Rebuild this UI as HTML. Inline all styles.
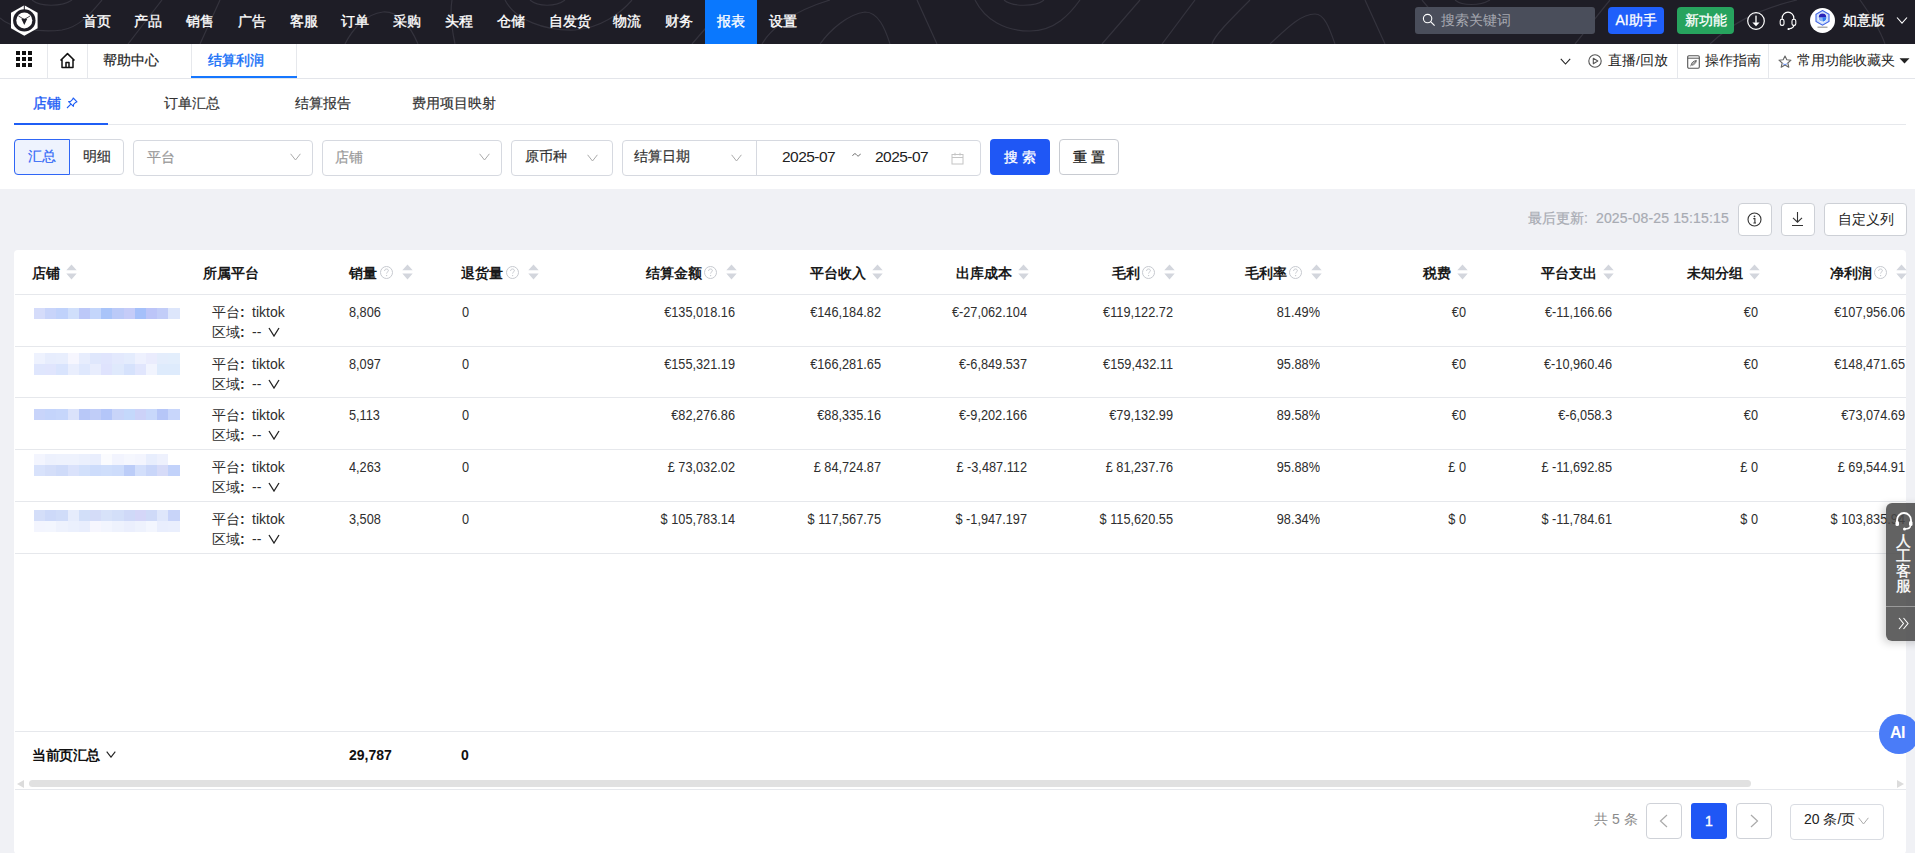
<!DOCTYPE html><html><head><meta charset="utf-8"><style>
*{box-sizing:border-box;margin:0;padding:0}
html,body{width:1915px;height:853px;overflow:hidden}
body{position:relative;background:#fff;font-family:"Liberation Sans",sans-serif;color:#222;font-size:14px}
.a{position:absolute;white-space:nowrap}
#top{position:absolute;left:0;top:0;width:1915px;height:44px;background:#1e1d26;overflow:hidden}
.nav{position:absolute;top:11px;color:#fff;font-size:14px;line-height:20px;-webkit-text-stroke:0.35px #fff}
.t14{font-size:14px;line-height:20px;-webkit-text-stroke:0.2px currentColor}
.num{transform:scaleX(0.91);transform-origin:left center}
.num.r{transform-origin:right center}
.hd{position:absolute;top:263px;font-size:14px;line-height:20px;font-weight:bold;color:#1a1a1a;white-space:nowrap}
.q{position:absolute;top:266px;width:13px;height:13px}
.srt{position:absolute;top:264px;width:11px;height:16px}
.cell{position:absolute;font-size:14px;line-height:20px;color:#2e2e2e;white-space:nowrap}
.r{text-align:right}
.btn{position:absolute;border:1px solid #cdd0d6;border-radius:4px;background:#fff}
.sel{position:absolute;top:140px;height:36px;border:1px solid #d6d9e0;border-radius:4px;background:#fff}
.chev{position:absolute}
</style></head><body>
<div id="top">
<svg class="a" style="left:0;top:0" width="1915" height="44">
<g fill="none" stroke="#34333d" stroke-width="1.2">
<path d="M32 0 C40 7 62 7 72 0"/>
<path d="M0 18 C10 28 40 33 62 30 C80 27 92 12 102 0"/>
<path d="M128 44 L162 0"/><path d="M200 44 L220 0"/>
<path d="M345 44 C352 30 365 14 383 12 C398 11 410 25 418 44"/>
<path d="M455 44 C452 30 450 12 452 0"/>
<path d="M530 0 C538 7 556 7 565 0"/>
<path d="M505 0 C515 20 545 31 575 30 C600 28 620 14 632 0"/>
<path d="M692 44 L730 0"/>
<path d="M762 44 C770 30 790 12 830 0"/>
<path d="M820 44 C830 30 848 14 865 12 C878 12 885 28 890 44"/>
<path d="M917 0 L937 44"/>
<path d="M1004 0 C1012 7 1036 7 1044 0"/>
<path d="M975 0 C985 20 1005 31 1030 31 C1055 31 1070 14 1080 0"/>
<path d="M1102 44 L1140 0"/><path d="M1162 44 L1195 0"/>
<path d="M1212 44 C1214 36 1230 20 1250 0"/>
<path d="M1270 44 C1285 30 1300 14 1315 14 C1325 14 1330 30 1335 44"/>
<path d="M1365 0 L1385 44"/><path d="M1422 0 L1432 12"/>
<path d="M1455 0 C1462 6 1480 6 1490 0"/>
<path d="M1575 44 C1585 32 1595 18 1610 0"/>
<path d="M1710 44 C1730 25 1755 10 1797 0"/>
<path d="M1860 0 C1870 14 1880 30 1885 44"/>
</g></svg>
<svg class="a" style="left:9px;top:4px" width="31" height="33" viewBox="0 0 31 33">
<polygon points="15.3,1.2 28.6,8.8 28.6,24.2 15.3,31.8 2,24.2 2,8.8" fill="#fff"/>
<circle cx="15.3" cy="16.4" r="11.2" fill="#1e1d26"/>
<circle cx="15.3" cy="16.4" r="8" fill="#fff"/>
<rect x="14.8" y="1" width="1" height="5" fill="#1e1d26"/>
<path d="M12.3 14.8 L18.3 14.8 L15.3 21 Z" fill="#1e1d26"/>
<path d="M15.3 15.5 L9.5 12 M15.3 15.5 L21 12" stroke="#1e1d26" stroke-width="0.8"/>
</svg>
<div class="a" style="left:705px;top:0;width:52px;height:44px;background:#0a78fe"></div>
<span class="nav" style="left:83px">首页</span>
<span class="nav" style="left:134px">产品</span>
<span class="nav" style="left:186px">销售</span>
<span class="nav" style="left:238px">广告</span>
<span class="nav" style="left:290px">客服</span>
<span class="nav" style="left:341px">订单</span>
<span class="nav" style="left:393px">采购</span>
<span class="nav" style="left:445px">头程</span>
<span class="nav" style="left:497px">仓储</span>
<span class="nav" style="left:549px">自发货</span>
<span class="nav" style="left:613px">物流</span>
<span class="nav" style="left:665px">财务</span>
<span class="nav" style="left:769px">设置</span>
<span class="nav" style="left:717px">报表</span>
<div class="a" style="left:1415px;top:7px;width:180px;height:27px;background:#4a4e5b;border-radius:3px"></div>
<svg class="a" style="left:1422px;top:13px" width="14" height="14" viewBox="0 0 14 14"><circle cx="5.6" cy="5.6" r="4.2" fill="none" stroke="#fff" stroke-width="1.1"/><path d="M8.6 8.6 L12.6 12.6" stroke="#fff" stroke-width="1.2"/></svg>
<span class="a" style="left:1441px;top:10px;font-size:14px;line-height:20px;color:#a6a8b0">搜索关键词</span>
<div class="a" style="left:1608px;top:7px;width:56px;height:27px;background:#1f5ffb;border-radius:4px;color:#fff;font-size:14px;line-height:27px;text-align:center;-webkit-text-stroke:0.3px #fff">AI助手</div>
<div class="a" style="left:1677px;top:7px;width:57px;height:27px;background:#27a35e;border-radius:4px;color:#fff;font-size:14px;line-height:27px;text-align:center;-webkit-text-stroke:0.3px #fff">新功能</div>
<svg class="a" style="left:1747px;top:12px" width="18" height="18" viewBox="0 0 18 18"><circle cx="9" cy="9" r="8.3" fill="none" stroke="#fff" stroke-width="1.2"/><rect x="8.2" y="3.6" width="1.6" height="7.2" fill="#d8d8d8"/><path d="M5.4 10.4 H12.6 L9 14.2 Z" fill="#fff"/></svg>
<svg class="a" style="left:1779px;top:11px" width="18" height="19" viewBox="0 0 18 19"><path d="M3.2 8.5 V7 A5.8 5.8 0 0 1 14.8 7 V8.5" fill="none" stroke="#fff" stroke-width="1.2"/><rect x="1.2" y="8.2" width="3.8" height="6.2" rx="1.7" fill="none" stroke="#fff" stroke-width="1.1"/><rect x="13" y="8.2" width="3.8" height="6.2" rx="1.7" fill="none" stroke="#fff" stroke-width="1.1"/><path d="M15 14.4 C14.6 16.8 12.8 17.5 10.2 17.8" fill="none" stroke="#fff" stroke-width="1.1"/><circle cx="9.6" cy="18" r="1.1" fill="#fff"/></svg>
<div class="a" style="left:1810px;top:8px;width:25px;height:25px;border-radius:50%;background:#fff"></div>
<svg class="a" style="left:1815px;top:10px" width="15" height="19" viewBox="0 0 15 19"><polygon points="7.5,0.5 14,4.2 14,11.5 7.5,15.2 1,11.5 1,4.2" fill="#cfe0fb" stroke="#3f63e6" stroke-width="1.1"/><circle cx="7.5" cy="7.8" r="4.6" fill="#fff"/><circle cx="7.5" cy="7.8" r="3.8" fill="#8db4f3"/><path d="M3.7 7.2 A3.8 3.8 0 0 1 11.3 7.2 Z" fill="#2a22b8"/><path d="M7.5 7.2 L11.3 7.2 A3.8 3.8 0 0 1 8 11.6 Z" fill="#2f7af0"/><rect x="2.5" y="16.6" width="10" height="1.2" fill="#999"/></svg>
<span class="a" style="left:1843px;top:10px;color:#fff;font-size:14px;line-height:20px;-webkit-text-stroke:0.3px #fff">如意版</span>
<svg class="a" style="left:1896px;top:16px" width="12" height="9" viewBox="0 0 12 9"><path d="M1 1.5 L6 7.2 L11 1.5" fill="none" stroke="#fff" stroke-width="1.1"/></svg>
</div>
<div class="a" style="left:0;top:78px;width:1915px;height:1px;background:#e3e5ea"></div>
<div class="a" style="left:47px;top:44px;width:1px;height:34px;background:#e6e8ec"></div>
<div class="a" style="left:87px;top:44px;width:1px;height:34px;background:#e6e8ec"></div>
<div class="a" style="left:191px;top:44px;width:1px;height:34px;background:#e6e8ec"></div>
<div class="a" style="left:296px;top:44px;width:1px;height:34px;background:#e6e8ec"></div>
<svg class="a" style="left:16px;top:51px" width="16" height="16" viewBox="0 0 16 16" fill="#111"><rect x="0" y="0" width="4" height="4"/><rect x="0" y="6" width="4" height="4"/><rect x="0" y="12" width="4" height="4"/><rect x="6" y="0" width="4" height="4"/><rect x="6" y="6" width="4" height="4"/><rect x="6" y="12" width="4" height="4"/><rect x="12" y="0" width="4" height="4"/><rect x="12" y="6" width="4" height="4"/><rect x="12" y="12" width="4" height="4"/></svg>
<svg class="a" style="left:59px;top:52px" width="17" height="17" viewBox="0 0 17 17"><path d="M1.5 8.5 L8.5 1.6 L15.5 8.5 M3 7.2 V15.5 H14 V7.2 M7 15.5 V10.6 H10 V15.5" fill="none" stroke="#111" stroke-width="1.5" stroke-linejoin="round"/></svg>
<span class="a t14" style="left:103px;top:50px;color:#222">帮助中心</span>
<span class="a t14" style="left:208px;top:50px;color:#1670f7;-webkit-text-stroke:0.4px #1670f7">结算利润</span>
<div class="a" style="left:191px;top:76px;width:106px;height:2px;background:#1677ff"></div>
<svg class="a" style="left:1560px;top:58px" width="11" height="7" viewBox="0 0 11 7"><path d="M0.8 0.8 L5.5 6 L10.2 0.8" fill="none" stroke="#222" stroke-width="1.1"/></svg>
<svg class="a" style="left:1588px;top:54px" width="14" height="14" viewBox="0 0 14 14"><circle cx="7" cy="7" r="6.2" fill="none" stroke="#555" stroke-width="1.1"/><path d="M5.3 4.2 L9.8 7 L5.3 9.8 Z" fill="none" stroke="#555" stroke-width="1.1" stroke-linejoin="round"/></svg>
<span class="a" style="left:1608px;top:52px;font-size:13.5px;line-height:18px;color:#222">直播/回放</span>
<div class="a" style="left:1677px;top:44px;width:1px;height:34px;background:#e6e8ec"></div>
<svg class="a" style="left:1687px;top:55px" width="13" height="14" viewBox="0 0 13 14"><rect x="0.7" y="0.7" width="11.6" height="12.6" rx="1.2" fill="none" stroke="#555" stroke-width="1.1"/><path d="M0.7 3.2 H12.3" stroke="#555" stroke-width="1"/><path d="M3.3 11 L9.3 5.6 M4.2 9.8 C4.4 7.6 6.8 5.8 9.3 5.6 C9.1 8 7.2 9.9 4.9 10.2" fill="none" stroke="#555" stroke-width="0.9"/></svg>
<span class="a" style="left:1705px;top:52px;font-size:13.5px;line-height:18px;color:#222">操作指南</span>
<div class="a" style="left:1768px;top:44px;width:1px;height:34px;background:#e6e8ec"></div>
<svg class="a" style="left:1778px;top:55px" width="14" height="13" viewBox="0 0 14 13"><path d="M7 1 L8.8 4.8 L13 5.2 L9.8 8 L10.8 12.2 L7 10.1 L3.2 12.2 L4.2 8 L1 5.2 L5.2 4.8 Z" fill="none" stroke="#666" stroke-width="1.1" stroke-linejoin="round"/><path d="M5 8.6 C6 9.8 8 9.8 9 8.6" fill="none" stroke="#4b7cf5" stroke-width="0.8"/></svg>
<span class="a" style="left:1797px;top:52px;font-size:13.5px;line-height:18px;color:#222">常用功能收藏夹</span>
<svg class="a" style="left:1899px;top:58px" width="11" height="6" viewBox="0 0 11 6"><path d="M0.5 0.3 H10.5 L5.5 5.6 Z" fill="#222"/></svg>
<span class="a t14" style="left:33px;top:93px;color:#1f5ef5;-webkit-text-stroke:0.4px #1f5ef5">店铺</span>
<svg class="a" style="left:66px;top:97px" width="12" height="12" viewBox="0 0 12 12"><path d="M7.2 1 L11 4.8 L9.6 5.4 L7.6 7.4 L7.4 9.4 L2.6 4.6 L4.6 4.4 L6.6 2.4 Z M4.9 7.1 L1 11" fill="none" stroke="#1f5ef5" stroke-width="1.1" stroke-linejoin="round"/></svg>
<span class="a t14" style="left:164px;top:93px;color:#333">订单汇总</span>
<span class="a t14" style="left:295px;top:93px;color:#333">结算报告</span>
<span class="a t14" style="left:412px;top:93px;color:#333">费用项目映射</span>
<div class="a" style="left:14px;top:124px;width:1892px;height:1px;background:#e6e8ec"></div>
<div class="a" style="left:14px;top:123px;width:94px;height:2px;background:#1f5ef5"></div>
<div class="a" style="left:14px;top:139px;width:110px;height:36px;border:1px solid #d6d9e0;border-radius:4px"></div>
<div class="a" style="left:14px;top:139px;width:56px;height:36px;border:1px solid #2f66f6;border-radius:4px 0 0 4px;background:#eef3fe"></div>
<span class="a t14" style="left:28px;top:146px;color:#2f66f6">汇总</span>
<span class="a t14" style="left:83px;top:146px;color:#333">明细</span>
<div class="sel" style="left:133px;width:180px"></div>
<span class="a t14" style="left:147px;top:147px;color:#999">平台</span>
<svg class="a" style="left:290px;top:153px" width="11" height="8" viewBox="0 0 11 8"><path d="M0.6 0.8 L5.5 7 L10.4 0.8" fill="none" stroke="#aaa" stroke-width="1"/></svg>
<div class="sel" style="left:322px;width:180px"></div>
<span class="a t14" style="left:335px;top:147px;color:#999">店铺</span>
<svg class="a" style="left:479px;top:153px" width="11" height="8" viewBox="0 0 11 8"><path d="M0.6 0.8 L5.5 7 L10.4 0.8" fill="none" stroke="#aaa" stroke-width="1"/></svg>
<div class="sel" style="left:511px;width:102px"></div>
<span class="a t14" style="left:525px;top:146px;color:#333">原币种</span>
<svg class="a" style="left:587px;top:154px" width="11" height="8" viewBox="0 0 11 8"><path d="M0.6 0.8 L5.5 7 L10.4 0.8" fill="none" stroke="#aaa" stroke-width="1"/></svg>
<div class="sel" style="left:622px;width:359px"></div>
<div class="a" style="left:756px;top:140px;width:1px;height:36px;background:#d6d9e0"></div>
<span class="a t14" style="left:634px;top:146px;color:#333">结算日期</span>
<svg class="a" style="left:731px;top:154px" width="11" height="8" viewBox="0 0 11 8"><path d="M0.6 0.8 L5.5 7 L10.4 0.8" fill="none" stroke="#aaa" stroke-width="1"/></svg>
<span class="a" style="left:782px;top:147px;font-size:15.5px;line-height:20px;letter-spacing:-0.55px;color:#222">2025-07</span>
<svg class="a" style="left:852px;top:152px" width="9" height="6" viewBox="0 0 9 6"><path d="M0.6 3.8 C1.8 1.4 3.4 1.2 4.5 2.8 C5.6 4.4 7.2 4.4 8.4 1.8" fill="none" stroke="#666" stroke-width="1"/></svg>
<span class="a" style="left:875px;top:147px;font-size:15.5px;line-height:20px;letter-spacing:-0.55px;color:#222">2025-07</span>
<svg class="a" style="left:951px;top:152px" width="13" height="13" viewBox="0 0 13 13"><rect x="1" y="2.5" width="11" height="9.5" fill="none" stroke="#c4c4c4" stroke-width="1"/><path d="M1 5.5 H12 M4 0.8 V3.5 M9 0.8 V3.5" stroke="#c4c4c4" stroke-width="1"/></svg>
<div class="a" style="left:990px;top:139px;width:60px;height:36px;background:#1f57f5;border-radius:4px;color:#fff;font-size:14px;line-height:36px;text-align:center;letter-spacing:4px;padding-left:4px;-webkit-text-stroke:0.3px #fff">搜索</div>
<div class="btn" style="left:1059px;top:139px;width:60px;height:36px;color:#222;font-size:14px;line-height:34px;text-align:center;letter-spacing:4px;padding-left:4px;border-color:#c8cbd1;-webkit-text-stroke:0.3px #222">重置</div>
<div class="a" style="left:0;top:189px;width:1915px;height:664px;background:#f0f1f5"></div>
<span class="a t14" style="left:1528px;top:208px;color:#a8abb3">最后更新<span style="display:inline-block;width:12px">:</span><span style="letter-spacing:0.15px">2025-08-25 15:15:15</span></span>
<div class="btn" style="left:1738px;top:203px;width:34px;height:33px"></div>
<svg class="a" style="left:1747px;top:212px" width="15" height="15" viewBox="0 0 15 15"><circle cx="7.5" cy="7.5" r="6.5" fill="none" stroke="#333" stroke-width="1.1"/><circle cx="7.5" cy="4.3" r="0.9" fill="#333"/><path d="M6.3 6.6 H7.9 V11 M6.4 11 H9" fill="none" stroke="#333" stroke-width="1.1"/></svg>
<div class="btn" style="left:1781px;top:203px;width:34px;height:33px"></div>
<svg class="a" style="left:1790px;top:211px" width="15" height="16" viewBox="0 0 15 16"><path d="M7.5 1 V11 M3 6.8 L7.5 11.2 L12 6.8 M2 14.5 H13" fill="none" stroke="#333" stroke-width="1.1"/></svg>
<div class="btn" style="left:1824px;top:203px;width:83px;height:33px;color:#222;font-size:14px;line-height:31px;text-align:center">自定义列</div>
<div class="a" style="left:14px;top:250px;width:1892px;height:604px;background:#fff;border-radius:4px"></div>
<div class="a" style="left:15px;top:294px;width:1891px;height:1px;background:#e6e8ec"></div>
<span class="hd" style="left:32px">店铺</span>
<svg class="srt" style="left:66px" viewBox="0 0 11 16"><path d="M5.5 0.4 L10.7 6.2 H0.3 Z M0.3 9.4 H10.7 L5.5 15.4 Z" fill="#d3d6dd"/></svg>
<span class="hd" style="left:203px">所属平台</span>
<span class="hd" style="left:349px">销量</span>
<svg class="q" style="left:380px" viewBox="0 0 13 13"><circle cx="6.5" cy="6.5" r="6" fill="none" stroke="#c6c9cf" stroke-width="1"/><path d="M4.6 5 C4.6 3.6 5.5 3 6.5 3 C7.6 3 8.4 3.7 8.4 4.7 C8.4 5.9 6.6 6 6.6 7.5" fill="none" stroke="#c6c9cf" stroke-width="1"/><circle cx="6.6" cy="9.6" r="0.7" fill="#c6c9cf"/></svg>
<svg class="srt" style="left:402px" viewBox="0 0 11 16"><path d="M5.5 0.4 L10.7 6.2 H0.3 Z M0.3 9.4 H10.7 L5.5 15.4 Z" fill="#d3d6dd"/></svg>
<span class="hd" style="left:461px">退货量</span>
<svg class="q" style="left:506px" viewBox="0 0 13 13"><circle cx="6.5" cy="6.5" r="6" fill="none" stroke="#c6c9cf" stroke-width="1"/><path d="M4.6 5 C4.6 3.6 5.5 3 6.5 3 C7.6 3 8.4 3.7 8.4 4.7 C8.4 5.9 6.6 6 6.6 7.5" fill="none" stroke="#c6c9cf" stroke-width="1"/><circle cx="6.6" cy="9.6" r="0.7" fill="#c6c9cf"/></svg>
<svg class="srt" style="left:528px" viewBox="0 0 11 16"><path d="M5.5 0.4 L10.7 6.2 H0.3 Z M0.3 9.4 H10.7 L5.5 15.4 Z" fill="#d3d6dd"/></svg>
<span class="hd" style="left:402px;width:300px;text-align:right">结算金额</span>
<svg class="q" style="left:704px" viewBox="0 0 13 13"><circle cx="6.5" cy="6.5" r="6" fill="none" stroke="#c6c9cf" stroke-width="1"/><path d="M4.6 5 C4.6 3.6 5.5 3 6.5 3 C7.6 3 8.4 3.7 8.4 4.7 C8.4 5.9 6.6 6 6.6 7.5" fill="none" stroke="#c6c9cf" stroke-width="1"/><circle cx="6.6" cy="9.6" r="0.7" fill="#c6c9cf"/></svg>
<svg class="srt" style="left:726px" viewBox="0 0 11 16"><path d="M5.5 0.4 L10.7 6.2 H0.3 Z M0.3 9.4 H10.7 L5.5 15.4 Z" fill="#d3d6dd"/></svg>
<span class="hd" style="left:566px;width:300px;text-align:right">平台收入</span>
<svg class="srt" style="left:872px" viewBox="0 0 11 16"><path d="M5.5 0.4 L10.7 6.2 H0.3 Z M0.3 9.4 H10.7 L5.5 15.4 Z" fill="#d3d6dd"/></svg>
<span class="hd" style="left:712px;width:300px;text-align:right">出库成本</span>
<svg class="srt" style="left:1018px" viewBox="0 0 11 16"><path d="M5.5 0.4 L10.7 6.2 H0.3 Z M0.3 9.4 H10.7 L5.5 15.4 Z" fill="#d3d6dd"/></svg>
<span class="hd" style="left:840px;width:300px;text-align:right">毛利</span>
<svg class="q" style="left:1142px" viewBox="0 0 13 13"><circle cx="6.5" cy="6.5" r="6" fill="none" stroke="#c6c9cf" stroke-width="1"/><path d="M4.6 5 C4.6 3.6 5.5 3 6.5 3 C7.6 3 8.4 3.7 8.4 4.7 C8.4 5.9 6.6 6 6.6 7.5" fill="none" stroke="#c6c9cf" stroke-width="1"/><circle cx="6.6" cy="9.6" r="0.7" fill="#c6c9cf"/></svg>
<svg class="srt" style="left:1164px" viewBox="0 0 11 16"><path d="M5.5 0.4 L10.7 6.2 H0.3 Z M0.3 9.4 H10.7 L5.5 15.4 Z" fill="#d3d6dd"/></svg>
<span class="hd" style="left:987px;width:300px;text-align:right">毛利率</span>
<svg class="q" style="left:1289px" viewBox="0 0 13 13"><circle cx="6.5" cy="6.5" r="6" fill="none" stroke="#c6c9cf" stroke-width="1"/><path d="M4.6 5 C4.6 3.6 5.5 3 6.5 3 C7.6 3 8.4 3.7 8.4 4.7 C8.4 5.9 6.6 6 6.6 7.5" fill="none" stroke="#c6c9cf" stroke-width="1"/><circle cx="6.6" cy="9.6" r="0.7" fill="#c6c9cf"/></svg>
<svg class="srt" style="left:1311px" viewBox="0 0 11 16"><path d="M5.5 0.4 L10.7 6.2 H0.3 Z M0.3 9.4 H10.7 L5.5 15.4 Z" fill="#d3d6dd"/></svg>
<span class="hd" style="left:1151px;width:300px;text-align:right">税费</span>
<svg class="srt" style="left:1457px" viewBox="0 0 11 16"><path d="M5.5 0.4 L10.7 6.2 H0.3 Z M0.3 9.4 H10.7 L5.5 15.4 Z" fill="#d3d6dd"/></svg>
<span class="hd" style="left:1297px;width:300px;text-align:right">平台支出</span>
<svg class="srt" style="left:1603px" viewBox="0 0 11 16"><path d="M5.5 0.4 L10.7 6.2 H0.3 Z M0.3 9.4 H10.7 L5.5 15.4 Z" fill="#d3d6dd"/></svg>
<span class="hd" style="left:1443px;width:300px;text-align:right">未知分组</span>
<svg class="srt" style="left:1749px" viewBox="0 0 11 16"><path d="M5.5 0.4 L10.7 6.2 H0.3 Z M0.3 9.4 H10.7 L5.5 15.4 Z" fill="#d3d6dd"/></svg>
<span class="hd" style="left:1572px;width:300px;text-align:right">净利润</span>
<svg class="q" style="left:1874px" viewBox="0 0 13 13"><circle cx="6.5" cy="6.5" r="6" fill="none" stroke="#c6c9cf" stroke-width="1"/><path d="M4.6 5 C4.6 3.6 5.5 3 6.5 3 C7.6 3 8.4 3.7 8.4 4.7 C8.4 5.9 6.6 6 6.6 7.5" fill="none" stroke="#c6c9cf" stroke-width="1"/><circle cx="6.6" cy="9.6" r="0.7" fill="#c6c9cf"/></svg>
<svg class="srt" style="left:1896px" viewBox="0 0 11 16"><path d="M5.5 0.4 L10.7 6.2 H0.3 Z M0.3 9.4 H10.7 L5.5 15.4 Z" fill="#d3d6dd"/></svg>
<span class="cell" style="left:212px;top:302px">平台<span style="display:inline-block;width:12px;font-weight:bold">:</span>tiktok</span>
<span class="cell" style="left:212px;top:322px">区域<span style="display:inline-block;width:12px;font-weight:bold">:</span>--</span>
<svg class="a" style="left:268px;top:327px" width="12" height="10" viewBox="0 0 12 10"><path d="M1 1 L6 9 L11 1" fill="none" stroke="#222" stroke-width="1.3"/></svg>
<span class="cell num" style="left:349px;top:302px">8,806</span>
<span class="cell num" style="left:462px;top:302px">0</span>
<span class="cell num r" style="left:435px;width:300px;top:302px">€135,018.16</span>
<span class="cell num r" style="left:581px;width:300px;top:302px">€146,184.82</span>
<span class="cell num r" style="left:727px;width:300px;top:302px">€-27,062.104</span>
<span class="cell num r" style="left:873px;width:300px;top:302px">€119,122.72</span>
<span class="cell num r" style="left:1020px;width:300px;top:302px">81.49%</span>
<span class="cell num r" style="left:1166px;width:300px;top:302px">€0</span>
<span class="cell num r" style="left:1312px;width:300px;top:302px">€-11,166.66</span>
<span class="cell num r" style="left:1458px;width:300px;top:302px">€0</span>
<span class="cell num r" style="left:1605px;width:300px;top:302px">€107,956.06</span>
<div class="a" style="left:15px;top:346px;width:1891px;height:1px;background:#e6e8ec"></div>
<span class="cell" style="left:212px;top:354px">平台<span style="display:inline-block;width:12px;font-weight:bold">:</span>tiktok</span>
<span class="cell" style="left:212px;top:374px">区域<span style="display:inline-block;width:12px;font-weight:bold">:</span>--</span>
<svg class="a" style="left:268px;top:379px" width="12" height="10" viewBox="0 0 12 10"><path d="M1 1 L6 9 L11 1" fill="none" stroke="#222" stroke-width="1.3"/></svg>
<span class="cell num" style="left:349px;top:354px">8,097</span>
<span class="cell num" style="left:462px;top:354px">0</span>
<span class="cell num r" style="left:435px;width:300px;top:354px">€155,321.19</span>
<span class="cell num r" style="left:581px;width:300px;top:354px">€166,281.65</span>
<span class="cell num r" style="left:727px;width:300px;top:354px">€-6,849.537</span>
<span class="cell num r" style="left:873px;width:300px;top:354px">€159,432.11</span>
<span class="cell num r" style="left:1020px;width:300px;top:354px">95.88%</span>
<span class="cell num r" style="left:1166px;width:300px;top:354px">€0</span>
<span class="cell num r" style="left:1312px;width:300px;top:354px">€-10,960.46</span>
<span class="cell num r" style="left:1458px;width:300px;top:354px">€0</span>
<span class="cell num r" style="left:1605px;width:300px;top:354px">€148,471.65</span>
<div class="a" style="left:15px;top:397px;width:1891px;height:1px;background:#e6e8ec"></div>
<span class="cell" style="left:212px;top:405px">平台<span style="display:inline-block;width:12px;font-weight:bold">:</span>tiktok</span>
<span class="cell" style="left:212px;top:425px">区域<span style="display:inline-block;width:12px;font-weight:bold">:</span>--</span>
<svg class="a" style="left:268px;top:430px" width="12" height="10" viewBox="0 0 12 10"><path d="M1 1 L6 9 L11 1" fill="none" stroke="#222" stroke-width="1.3"/></svg>
<span class="cell num" style="left:349px;top:405px">5,113</span>
<span class="cell num" style="left:462px;top:405px">0</span>
<span class="cell num r" style="left:435px;width:300px;top:405px">€82,276.86</span>
<span class="cell num r" style="left:581px;width:300px;top:405px">€88,335.16</span>
<span class="cell num r" style="left:727px;width:300px;top:405px">€-9,202.166</span>
<span class="cell num r" style="left:873px;width:300px;top:405px">€79,132.99</span>
<span class="cell num r" style="left:1020px;width:300px;top:405px">89.58%</span>
<span class="cell num r" style="left:1166px;width:300px;top:405px">€0</span>
<span class="cell num r" style="left:1312px;width:300px;top:405px">€-6,058.3</span>
<span class="cell num r" style="left:1458px;width:300px;top:405px">€0</span>
<span class="cell num r" style="left:1605px;width:300px;top:405px">€73,074.69</span>
<div class="a" style="left:15px;top:449px;width:1891px;height:1px;background:#e6e8ec"></div>
<span class="cell" style="left:212px;top:457px">平台<span style="display:inline-block;width:12px;font-weight:bold">:</span>tiktok</span>
<span class="cell" style="left:212px;top:477px">区域<span style="display:inline-block;width:12px;font-weight:bold">:</span>--</span>
<svg class="a" style="left:268px;top:482px" width="12" height="10" viewBox="0 0 12 10"><path d="M1 1 L6 9 L11 1" fill="none" stroke="#222" stroke-width="1.3"/></svg>
<span class="cell num" style="left:349px;top:457px">4,263</span>
<span class="cell num" style="left:462px;top:457px">0</span>
<span class="cell num r" style="left:435px;width:300px;top:457px">£ 73,032.02</span>
<span class="cell num r" style="left:581px;width:300px;top:457px">£ 84,724.87</span>
<span class="cell num r" style="left:727px;width:300px;top:457px">£ -3,487.112</span>
<span class="cell num r" style="left:873px;width:300px;top:457px">£ 81,237.76</span>
<span class="cell num r" style="left:1020px;width:300px;top:457px">95.88%</span>
<span class="cell num r" style="left:1166px;width:300px;top:457px">£ 0</span>
<span class="cell num r" style="left:1312px;width:300px;top:457px">£ -11,692.85</span>
<span class="cell num r" style="left:1458px;width:300px;top:457px">£ 0</span>
<span class="cell num r" style="left:1605px;width:300px;top:457px">£ 69,544.91</span>
<div class="a" style="left:15px;top:501px;width:1891px;height:1px;background:#e6e8ec"></div>
<span class="cell" style="left:212px;top:509px">平台<span style="display:inline-block;width:12px;font-weight:bold">:</span>tiktok</span>
<span class="cell" style="left:212px;top:529px">区域<span style="display:inline-block;width:12px;font-weight:bold">:</span>--</span>
<svg class="a" style="left:268px;top:534px" width="12" height="10" viewBox="0 0 12 10"><path d="M1 1 L6 9 L11 1" fill="none" stroke="#222" stroke-width="1.3"/></svg>
<span class="cell num" style="left:349px;top:509px">3,508</span>
<span class="cell num" style="left:462px;top:509px">0</span>
<span class="cell num r" style="left:435px;width:300px;top:509px">$ 105,783.14</span>
<span class="cell num r" style="left:581px;width:300px;top:509px">$ 117,567.75</span>
<span class="cell num r" style="left:727px;width:300px;top:509px">$ -1,947.197</span>
<span class="cell num r" style="left:873px;width:300px;top:509px">$ 115,620.55</span>
<span class="cell num r" style="left:1020px;width:300px;top:509px">98.34%</span>
<span class="cell num r" style="left:1166px;width:300px;top:509px">$ 0</span>
<span class="cell num r" style="left:1312px;width:300px;top:509px">$ -11,784.61</span>
<span class="cell num r" style="left:1458px;width:300px;top:509px">$ 0</span>
<span class="cell num r" style="left:1605px;width:300px;top:509px">$ 103,835.94</span>
<div class="a" style="left:15px;top:553px;width:1891px;height:1px;background:#e6e8ec"></div>
<div class="a" style="left:34.0px;top:308px;width:11.4px;height:11px;background:#d5dcfa"></div>
<div class="a" style="left:45.2px;top:308px;width:11.4px;height:11px;background:#c8d4fa"></div>
<div class="a" style="left:56.4px;top:308px;width:11.4px;height:11px;background:#c0d2fb"></div>
<div class="a" style="left:67.6px;top:308px;width:11.4px;height:11px;background:#d0dffb"></div>
<div class="a" style="left:78.8px;top:308px;width:11.4px;height:11px;background:#bcc8f8"></div>
<div class="a" style="left:90.0px;top:308px;width:11.4px;height:11px;background:#c4d6fb"></div>
<div class="a" style="left:101.2px;top:308px;width:11.4px;height:11px;background:#a9c4f9"></div>
<div class="a" style="left:112.4px;top:308px;width:11.4px;height:11px;background:#bbcaf8"></div>
<div class="a" style="left:123.6px;top:308px;width:11.4px;height:11px;background:#c5ccf8"></div>
<div class="a" style="left:134.8px;top:308px;width:11.4px;height:11px;background:#a5c0fa"></div>
<div class="a" style="left:146.0px;top:308px;width:11.4px;height:11px;background:#bcc5f8"></div>
<div class="a" style="left:157.2px;top:308px;width:11.4px;height:11px;background:#c2cdf8"></div>
<div class="a" style="left:168.4px;top:308px;width:11.4px;height:11px;background:#dde6fb"></div>
<div class="a" style="left:34.0px;top:353px;width:11.4px;height:11px;background:#eef2fe"></div>
<div class="a" style="left:45.2px;top:353px;width:11.4px;height:11px;background:#e7edfd"></div>
<div class="a" style="left:56.4px;top:353px;width:11.4px;height:11px;background:#e8eefd"></div>
<div class="a" style="left:67.6px;top:353px;width:11.4px;height:11px;background:#f6f6fe"></div>
<div class="a" style="left:78.8px;top:353px;width:11.4px;height:11px;background:#e7edfd"></div>
<div class="a" style="left:90.0px;top:353px;width:11.4px;height:11px;background:#dfe7fc"></div>
<div class="a" style="left:101.2px;top:353px;width:11.4px;height:11px;background:#e0e5fd"></div>
<div class="a" style="left:112.4px;top:353px;width:11.4px;height:11px;background:#e3e9fd"></div>
<div class="a" style="left:123.6px;top:353px;width:11.4px;height:11px;background:#e4ecfd"></div>
<div class="a" style="left:134.8px;top:353px;width:11.4px;height:11px;background:#eef1fe"></div>
<div class="a" style="left:146.0px;top:353px;width:11.4px;height:11px;background:#eaecfd"></div>
<div class="a" style="left:157.2px;top:353px;width:11.4px;height:11px;background:#e4edfc"></div>
<div class="a" style="left:168.4px;top:353px;width:11.4px;height:11px;background:#e3eefc"></div>
<div class="a" style="left:34.0px;top:364px;width:11.4px;height:11px;background:#dfe6fd"></div>
<div class="a" style="left:45.2px;top:364px;width:11.4px;height:11px;background:#e0e5fd"></div>
<div class="a" style="left:56.4px;top:364px;width:11.4px;height:11px;background:#d9e4fd"></div>
<div class="a" style="left:67.6px;top:364px;width:11.4px;height:11px;background:#e9eefd"></div>
<div class="a" style="left:78.8px;top:364px;width:11.4px;height:11px;background:#dfe8fd"></div>
<div class="a" style="left:90.0px;top:364px;width:11.4px;height:11px;background:#e8edfd"></div>
<div class="a" style="left:101.2px;top:364px;width:11.4px;height:11px;background:#dfe3fd"></div>
<div class="a" style="left:112.4px;top:364px;width:11.4px;height:11px;background:#dfe9fc"></div>
<div class="a" style="left:123.6px;top:364px;width:11.4px;height:11px;background:#d6e2fc"></div>
<div class="a" style="left:134.8px;top:364px;width:11.4px;height:11px;background:#e1e6fd"></div>
<div class="a" style="left:146.0px;top:364px;width:11.4px;height:11px;background:#f1f4fe"></div>
<div class="a" style="left:157.2px;top:364px;width:11.4px;height:11px;background:#deebfc"></div>
<div class="a" style="left:168.4px;top:364px;width:11.4px;height:11px;background:#deebfc"></div>
<div class="a" style="left:34.0px;top:409px;width:11.4px;height:11px;background:#c8d4fa"></div>
<div class="a" style="left:45.2px;top:409px;width:11.4px;height:11px;background:#c4d4fb"></div>
<div class="a" style="left:56.4px;top:409px;width:11.4px;height:11px;background:#c6d6fb"></div>
<div class="a" style="left:67.6px;top:409px;width:11.4px;height:11px;background:#dae2fb"></div>
<div class="a" style="left:78.8px;top:409px;width:11.4px;height:11px;background:#b8c8f8"></div>
<div class="a" style="left:90.0px;top:409px;width:11.4px;height:11px;background:#c0cdf8"></div>
<div class="a" style="left:101.2px;top:409px;width:11.4px;height:11px;background:#b4c6f9"></div>
<div class="a" style="left:112.4px;top:409px;width:11.4px;height:11px;background:#c8d4f9"></div>
<div class="a" style="left:123.6px;top:409px;width:11.4px;height:11px;background:#c4d8fb"></div>
<div class="a" style="left:134.8px;top:409px;width:11.4px;height:11px;background:#ccd2f8"></div>
<div class="a" style="left:146.0px;top:409px;width:11.4px;height:11px;background:#c8d8fb"></div>
<div class="a" style="left:157.2px;top:409px;width:11.4px;height:11px;background:#b6c6f8"></div>
<div class="a" style="left:168.4px;top:409px;width:11.4px;height:11px;background:#c8d6fb"></div>
<div class="a" style="left:34.0px;top:454px;width:11.4px;height:11px;background:#f3f5fe"></div>
<div class="a" style="left:45.2px;top:454px;width:11.4px;height:11px;background:#edf1fd"></div>
<div class="a" style="left:56.4px;top:454px;width:11.4px;height:11px;background:#eef2fd"></div>
<div class="a" style="left:67.6px;top:454px;width:11.4px;height:11px;background:#eef2fd"></div>
<div class="a" style="left:78.8px;top:454px;width:11.4px;height:11px;background:#ebf0fd"></div>
<div class="a" style="left:90.0px;top:454px;width:11.4px;height:11px;background:#e9eefd"></div>
<div class="a" style="left:101.2px;top:454px;width:11.4px;height:11px;background:#fafbfe"></div>
<div class="a" style="left:112.4px;top:454px;width:11.4px;height:11px;background:#f2f4fe"></div>
<div class="a" style="left:123.6px;top:454px;width:11.4px;height:11px;background:#f5f7fe"></div>
<div class="a" style="left:134.8px;top:454px;width:11.4px;height:11px;background:#f3f5fe"></div>
<div class="a" style="left:146.0px;top:454px;width:11.4px;height:11px;background:#e8eefd"></div>
<div class="a" style="left:157.2px;top:454px;width:11.4px;height:11px;background:#eef1fd"></div>
<div class="a" style="left:168.4px;top:454px;width:11.4px;height:11px;background:#ffffff"></div>
<div class="a" style="left:34.0px;top:465px;width:11.4px;height:11px;background:#d8e2fb"></div>
<div class="a" style="left:45.2px;top:465px;width:11.4px;height:11px;background:#d4def9"></div>
<div class="a" style="left:56.4px;top:465px;width:11.4px;height:11px;background:#cfdbf9"></div>
<div class="a" style="left:67.6px;top:465px;width:11.4px;height:11px;background:#dae2fb"></div>
<div class="a" style="left:78.8px;top:465px;width:11.4px;height:11px;background:#d2e0fb"></div>
<div class="a" style="left:90.0px;top:465px;width:11.4px;height:11px;background:#cddcfb"></div>
<div class="a" style="left:101.2px;top:465px;width:11.4px;height:11px;background:#cfdefb"></div>
<div class="a" style="left:112.4px;top:465px;width:11.4px;height:11px;background:#cddcfb"></div>
<div class="a" style="left:123.6px;top:465px;width:11.4px;height:11px;background:#bccdf8"></div>
<div class="a" style="left:134.8px;top:465px;width:11.4px;height:11px;background:#d3dffb"></div>
<div class="a" style="left:146.0px;top:465px;width:11.4px;height:11px;background:#c9d6f9"></div>
<div class="a" style="left:157.2px;top:465px;width:11.4px;height:11px;background:#d6dbf8"></div>
<div class="a" style="left:168.4px;top:465px;width:11.4px;height:11px;background:#c2d2fa"></div>
<div class="a" style="left:34.0px;top:510px;width:11.4px;height:11px;background:#d4def9"></div>
<div class="a" style="left:45.2px;top:510px;width:11.4px;height:11px;background:#cdd9f9"></div>
<div class="a" style="left:56.4px;top:510px;width:11.4px;height:11px;background:#d0dcf9"></div>
<div class="a" style="left:67.6px;top:510px;width:11.4px;height:11px;background:#e6ecfc"></div>
<div class="a" style="left:78.8px;top:510px;width:11.4px;height:11px;background:#d2dff9"></div>
<div class="a" style="left:90.0px;top:510px;width:11.4px;height:11px;background:#d4dcf8"></div>
<div class="a" style="left:101.2px;top:510px;width:11.4px;height:11px;background:#d7e2f9"></div>
<div class="a" style="left:112.4px;top:510px;width:11.4px;height:11px;background:#d3dff9"></div>
<div class="a" style="left:123.6px;top:510px;width:11.4px;height:11px;background:#cfd9f8"></div>
<div class="a" style="left:134.8px;top:510px;width:11.4px;height:11px;background:#d4d6f8"></div>
<div class="a" style="left:146.0px;top:510px;width:11.4px;height:11px;background:#cfdaf8"></div>
<div class="a" style="left:157.2px;top:510px;width:11.4px;height:11px;background:#dfe7fb"></div>
<div class="a" style="left:168.4px;top:510px;width:11.4px;height:11px;background:#c8d4f9"></div>
<div class="a" style="left:34.0px;top:521px;width:11.4px;height:11px;background:#f3f5fe"></div>
<div class="a" style="left:45.2px;top:521px;width:11.4px;height:11px;background:#f3f6fe"></div>
<div class="a" style="left:56.4px;top:521px;width:11.4px;height:11px;background:#eef2fd"></div>
<div class="a" style="left:67.6px;top:521px;width:11.4px;height:11px;background:#ebf0fd"></div>
<div class="a" style="left:78.8px;top:521px;width:11.4px;height:11px;background:#e9eefd"></div>
<div class="a" style="left:90.0px;top:521px;width:11.4px;height:11px;background:#f6f6fe"></div>
<div class="a" style="left:101.2px;top:521px;width:11.4px;height:11px;background:#f2f5fe"></div>
<div class="a" style="left:112.4px;top:521px;width:11.4px;height:11px;background:#eef2fd"></div>
<div class="a" style="left:123.6px;top:521px;width:11.4px;height:11px;background:#ebeffd"></div>
<div class="a" style="left:134.8px;top:521px;width:11.4px;height:11px;background:#eef2fd"></div>
<div class="a" style="left:146.0px;top:521px;width:11.4px;height:11px;background:#f3f6fe"></div>
<div class="a" style="left:157.2px;top:521px;width:11.4px;height:11px;background:#e9eefd"></div>
<div class="a" style="left:168.4px;top:521px;width:11.4px;height:11px;background:#eaeffd"></div>
<div class="a" style="left:15px;top:731px;width:1891px;height:1px;background:#e6e8ec"></div>
<span class="a" style="left:32px;top:745px;font-size:14px;line-height:20px;font-weight:bold;letter-spacing:-0.5px;color:#111">当前页汇总</span>
<svg class="a" style="left:106px;top:751px" width="10" height="7" viewBox="0 0 10 7"><path d="M0.7 0.7 L5 6.2 L9.3 0.7" fill="none" stroke="#222" stroke-width="1.1"/></svg>
<span class="a" style="left:349px;top:745px;font-size:14px;line-height:20px;font-weight:bold;color:#111">29,787</span>
<span class="a" style="left:461px;top:745px;font-size:14px;line-height:20px;font-weight:bold;color:#111">0</span>
<svg class="a" style="left:17px;top:780px" width="7" height="8" viewBox="0 0 7 8"><path d="M7 0 V8 L0 4 Z" fill="#dcdcdc"/></svg>
<div class="a" style="left:29px;top:780px;width:1722px;height:7px;background:#e1e1e1;border-radius:4px"></div>
<svg class="a" style="left:1897px;top:780px" width="7" height="8" viewBox="0 0 7 8"><path d="M0 0 V8 L7 4 Z" fill="#dcdcdc"/></svg>
<div class="a" style="left:15px;top:789px;width:1891px;height:1px;background:#e6e8ec"></div>
<span class="a" style="left:1594px;top:809px;font-size:14px;line-height:20px;color:#8a8a8a">共 5 条</span>
<div class="btn" style="left:1646px;top:803px;width:36px;height:36px;border-color:#cfd2d8"></div>
<svg class="a" style="left:1659px;top:814px" width="9" height="14" viewBox="0 0 9 14"><path d="M8 1 L1.5 7 L8 13" fill="none" stroke="#aaa" stroke-width="1.2"/></svg>
<div class="a" style="left:1691px;top:803px;width:36px;height:36px;background:#1f57f5;border-radius:3px;color:#fff;font-size:14px;line-height:36px;text-align:center;-webkit-text-stroke:0.4px #fff">1</div>
<div class="btn" style="left:1736px;top:803px;width:36px;height:36px;border-color:#cfd2d8"></div>
<svg class="a" style="left:1750px;top:814px" width="9" height="14" viewBox="0 0 9 14"><path d="M1 1 L7.5 7 L1 13" fill="none" stroke="#aaa" stroke-width="1.2"/></svg>
<div class="btn" style="left:1790px;top:804px;width:94px;height:36px;border-color:#d9dce2"></div>
<span class="a" style="left:1804px;top:809px;font-size:14px;line-height:20px;color:#222">20 条/页</span>
<svg class="a" style="left:1858px;top:817px" width="11" height="8" viewBox="0 0 11 8"><path d="M0.6 0.8 L5.5 7 L10.4 0.8" fill="none" stroke="#aaa" stroke-width="1"/></svg>
<div class="a" style="left:1886px;top:503px;width:40px;height:138px;background:rgba(72,72,72,0.86);border-radius:6px;box-shadow:-3px 2px 8px rgba(0,0,0,0.18)"></div>
<div class="a" style="left:1886px;top:606px;width:29px;height:1px;background:#9a9a9a"></div>
<svg class="a" style="left:1894px;top:512px" width="20" height="19" viewBox="0 0 20 19"><path d="M3 10 V8 A7 7 0 0 1 17 8 V10" fill="none" stroke="#fff" stroke-width="1.8"/><rect x="1.5" y="9" width="3.5" height="5" rx="1.5" fill="#fff"/><rect x="15" y="9" width="3.5" height="5" rx="1.5" fill="#fff"/><path d="M16.5 14 C16 16.5 14 17 11 17" fill="none" stroke="#fff" stroke-width="1.4"/><circle cx="10.5" cy="17" r="1.5" fill="#fff"/></svg>
<span class="a" style="left:1896px;top:533px;font-size:15px;line-height:15px;color:#fff;-webkit-text-stroke:0.3px #fff">人</span>
<span class="a" style="left:1896px;top:548px;font-size:15px;line-height:15px;color:#fff;-webkit-text-stroke:0.3px #fff">工</span>
<span class="a" style="left:1896px;top:563px;font-size:15px;line-height:15px;color:#fff;-webkit-text-stroke:0.3px #fff">客</span>
<span class="a" style="left:1896px;top:578px;font-size:15px;line-height:15px;color:#fff;-webkit-text-stroke:0.3px #fff">服</span>
<svg class="a" style="left:1898px;top:617px" width="11" height="13" viewBox="0 0 11 13"><path d="M1 1 L5.5 6.5 L1 12 M5.5 1 L10 6.5 L5.5 12" fill="none" stroke="#fff" stroke-width="1.1"/></svg>
<div class="a" style="left:1879px;top:714px;width:40px;height:40px;border-radius:50%;background:#4a7cf8;color:#fff;font-weight:bold;font-size:16px;line-height:38px;text-indent:11px;letter-spacing:-0.5px">AI</div>
</body></html>
